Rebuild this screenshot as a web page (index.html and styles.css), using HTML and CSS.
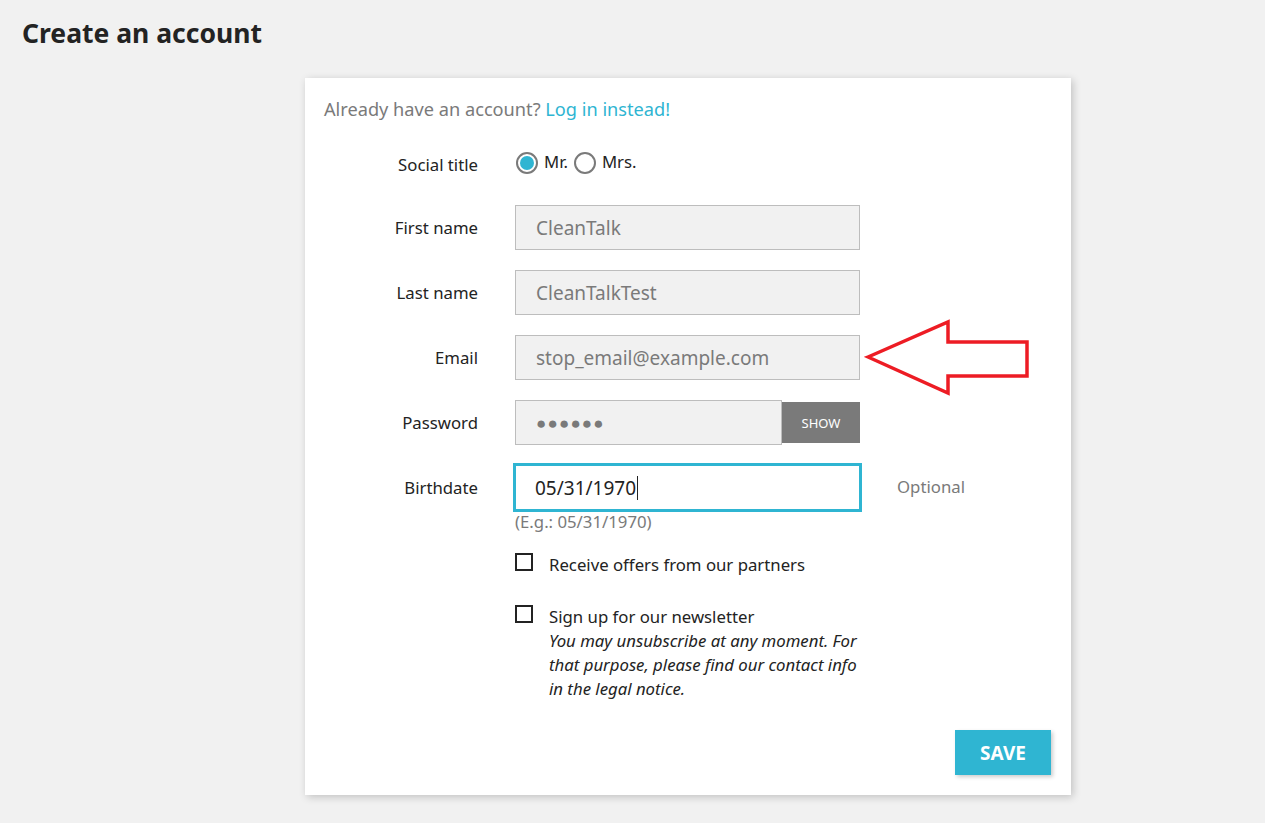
FILE: index.html
```html
<!DOCTYPE html>
<html>
  <head>
    <link rel="stylesheet" href="styles.css">
  </head>
  <body>
    <header class="page-header">
      <h1>Create an account</h1>
    </header>
    <section class="card">
      <p class="login-hint">Already have an account? <a href="#">Log in instead!</a></p>
      <form class="register-form">
        <div class="form-row">
          <label class="social-label">Social title</label>
          <div class="radios">
            <span class="radio checked"></span><span class="radio-text">Mr.</span>
            <span class="radio"></span><span class="radio-text">Mrs.</span>
          </div>
        </div>
        <div class="form-row">
          <label>First name</label>
          <div class="field">CleanTalk</div>
        </div>
        <div class="form-row">
          <label>Last name</label>
          <div class="field">CleanTalkTest</div>
        </div>
        <div class="form-row">
          <label>Email</label>
          <div class="field">stop_email@example.com</div>
        </div>
        <div class="form-row">
          <label>Password</label>
          <div class="password">
            <div class="field dots">&#9679;&#9679;&#9679;&#9679;&#9679;&#9679;</div>
            <button type="button" class="btn-show">SHOW</button>
          </div>
        </div>
        <div class="form-row birth-row">
          <label>Birthdate</label>
          <div class="field focused">05/31/1970<span class="caret"></span></div>
          <span class="optional">Optional</span>
          <span class="hint">(E.g.: 05/31/1970)</span>
        </div>
        <div class="form-row check-row">
          <div class="check">
            <span class="box"></span>
            <span>Receive offers from our partners</span>
          </div>
        </div>
        <div class="form-row check-row">
          <div class="check">
            <span class="box"></span>
            <span>Sign up for our newsletter<br><em>You may unsubscribe at any moment. For that purpose, please find our contact info in the legal notice.</em></span>
          </div>
        </div>
        <div class="form-footer">
          <button type="button" class="btn-save">SAVE</button>
        </div>
      </form>
    </section>

    <svg class="annotation" width="170" height="80" viewBox="0 0 170 80">
      <polygon points="4,39 84,4 84,24 163,24 163,58 84,58 84,75" fill="none" stroke="#ed1c24" stroke-width="3.5" stroke-linejoin="miter"/>
    </svg>
  </body>
</html>
```

FILE: styles.css
```css
body {
  margin: 0;
  background: #f1f1f1;
  font-family: "Noto Sans", "Open Sans", sans-serif;
  color: #232323;
}
.page-header {
  height: 78px;
  padding: 16px 22px 0;
  box-sizing: border-box;
}
h1 {
  margin: 0;
  font-size: 26.5px;
  line-height: 34px;
  font-weight: 700;
}
.card {
  margin-left: 305px;
  width: 766px;
  background: #fff;
  box-shadow: 2px 2px 8px 0 rgba(0, 0, 0, .2);
  padding: 19px 20px 20px 19px;
  box-sizing: border-box;
  margin-bottom: 28px;
}
.login-hint {
  margin: 0 0 19px;
  font-size: 18.2px;
  line-height: 24px;
  color: #7a7a7a;
}
.login-hint a {
  color: #2fb5d2;
  text-decoration: none;
}
.form-row {
  display: grid;
  grid-template-columns: 154px 345px auto;
  column-gap: 37px;
  align-items: center;
  min-height: 45px;
  margin-bottom: 20px;
  font-size: 16.75px;
}
.form-row label {
  text-align: right;
  line-height: 24px;
  padding-top: 1px;
}
.form-row .social-label {
  padding-top: 4px;
}
.radios {
  display: flex;
  align-items: center;
  padding-left: 1px;
}
.radio {
  width: 22px;
  height: 22px;
  border: 2px solid #7a7a7a;
  border-radius: 50%;
  box-sizing: border-box;
  padding: 2px;
  background-clip: content-box;
}
.radio.checked {
  background-color: #2fb5d2;
}
.radio-text {
  margin: -3px 6px 0 6px;
}
.field {
  height: 45px;
  border: 1px solid #bdbdbd;
  background: #f1f1f1;
  padding: 0 20px;
  box-sizing: border-box;
  display: flex;
  align-items: center;
  font-size: 19px;
  color: #7a7a7a;
}
.password {
  display: flex;
  align-items: center;
}
.password .field {
  flex: 1;
}
.dots {
  font-size: 17px;
  letter-spacing: 1.2px;
}
.btn-show {
  width: 78px;
  height: 41px;
  border: 0;
  background: #7a7a7a;
  color: #fff;
  font-family: inherit;
  font-size: 13px;
  padding: 0;
}
.birth-row {
  row-gap: 0;
  margin-bottom: 19px;
}
.field.focused {
  height: 49px;
  margin: -2px;
  border: 3px solid #2fb5d2;
  background: #fff;
  padding-left: 19px;
  color: #232323;
}
.caret {
  display: inline-block;
  width: 1px;
  height: 24px;
  background: #232323;
  margin-left: 1px;
}
.optional {
  color: #7a7a7a;
  margin-top: -3px;
}
.hint {
  grid-column: 2;
  line-height: 24px;
  color: #7a7a7a;
}
.check-row {
  min-height: 0;
  margin-bottom: 28px;
}
.check {
  grid-column: 2;
  display: flex;
  align-items: flex-start;
  gap: 16px;
  line-height: 24px;
}
.box {
  flex: none;
  width: 18px;
  height: 18px;
  border: 2px solid #232323;
  box-sizing: border-box;
}
.check em {
  font-style: italic;
}
.form-footer {
  display: flex;
  justify-content: flex-end;
  padding-top: 1px;
}
.btn-save {
  width: 96px;
  height: 45px;
  border: 0;
  background: #2fb5d2;
  color: #fff;
  font-family: inherit;
  font-size: 19px;
  font-weight: 700;
  box-shadow: 2px 2px 4px 0 rgba(0, 0, 0, .2);
}
.annotation {
  position: absolute;
  left: 864px;
  top: 318px;
}
```
